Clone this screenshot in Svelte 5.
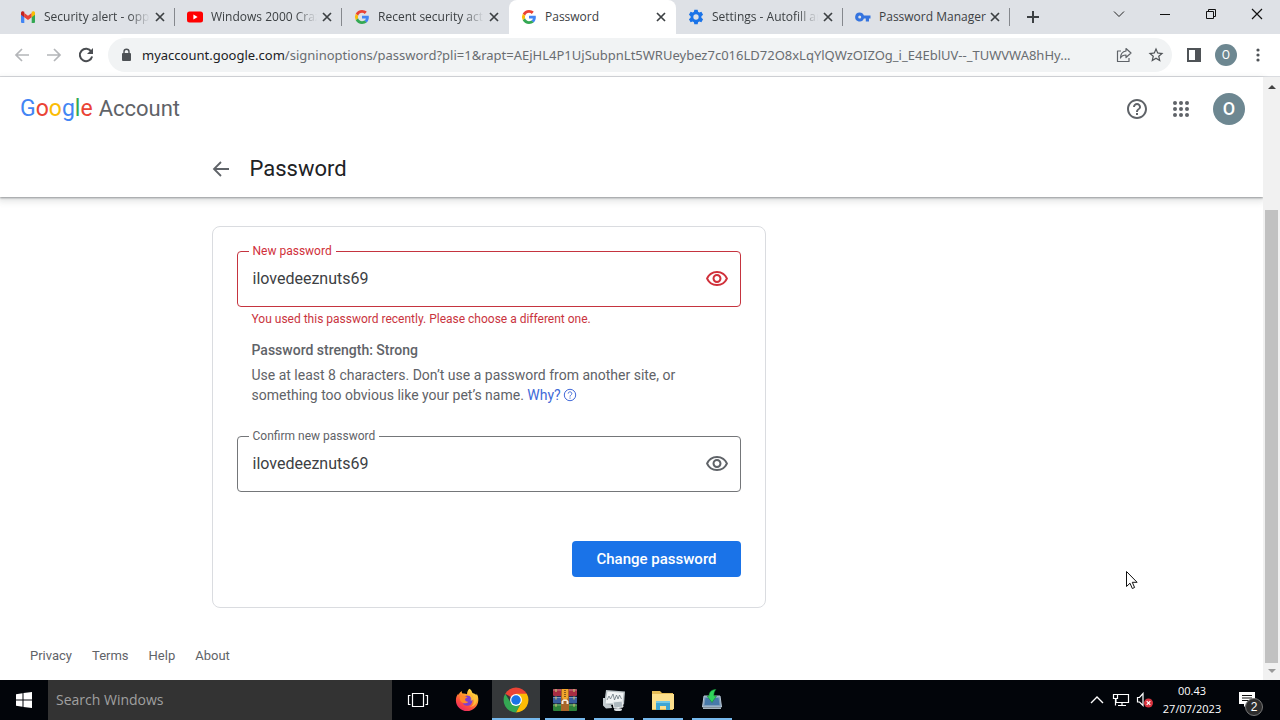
<script>
  const tabs = [
    { icon: 'gmail', title: 'Security alert - oppo', long: true },
    { icon: 'youtube', title: 'Windows 2000 Crazy', long: true },
    { icon: 'google', title: 'Recent security activity', long: true },
    { icon: 'google', title: 'Password', active: true },
    { icon: 'gear', title: 'Settings - Autofill and', long: true },
    { icon: 'key', title: 'Password Manager' }
  ];
  const apps = [
    { id: 'taskview', label: 'Task View' },
    { id: 'firefox', label: 'Firefox' },
    { id: 'chrome', label: 'Chrome', open: true, active: true },
    { id: 'winrar', label: 'WinRAR', open: true },
    { id: 'monitor', label: 'Performance Monitor', open: true },
    { id: 'explorer', label: 'File Explorer', open: true },
    { id: 'installer', label: 'Installer', open: true }
  ];
  const wordmark = [
    ['G', '#4285f4'], ['o', '#ea4335'], ['o', '#fbbc05'],
    ['g', '#4285f4'], ['l', '#34a853'], ['e', '#ea4335']
  ];
  const dots = [6, 12, 18];
  let newPassword = $state('ilovedeeznuts69');
  let confirmPassword = $state('ilovedeeznuts69');
</script>

{#snippet favicon(name)}
  {#if name === 'gmail'}
    <svg class="fav" viewBox="0 0 16 16" aria-hidden="true">
      <path d="M1 4.2V13a1 1 0 0 0 1 1h2.3V7z" fill="#4285f4" />
      <path d="M15 4.2V13a1 1 0 0 1-1 1h-2.3V7z" fill="#34a853" />
      <path d="M4.3 4v4.2L8 11l3.7-2.8V4L8 6.8z" fill="#ea4335" />
      <path d="M1 4c0-1.700 1.700-2.400 3.300-1.200v5.400L1 5.700z" fill="#c5221f" />
      <path d="M15 4c0-1.700-1.700-2.400-3.300-1.200v5.400L15 5.700z" fill="#fbbc04" />
    </svg>
  {:else if name === 'youtube'}
    <svg class="fav" viewBox="0 0 16 16" aria-hidden="true">
      <rect x="0" y="2.500" width="16" height="11" rx="2.500" fill="#f00" />
      <path d="M6.400 5.600v4.800L10.600 8z" fill="#fff" />
    </svg>
  {:else if name === 'google'}
    <svg class="fav" viewBox="0 0 48 48" aria-hidden="true">
      <path fill="#EA4335" d="M24 11.500c3.200 0 6 1.100 8.200 3.200l6.100-6.100C34.600 5.100 29.700 3 24 3 15.800 3 8.700 7.700 5.200 14.600l7.100 5.500c1.700-5 6.300-8.600 11.700-8.600z" />
      <path fill="#4285F4" d="M44.500 24.500c0-1.600-.2-2.700-.4-4H24v7.800h11.700c-.5 3-2.200 5.300-4.700 7l6.900 5.300c4.200-3.900 6.600-9.500 6.600-16.100z" />
      <path fill="#FBBC05" d="M12.300 27.900a12.600 12.600 0 0 1 0-7.800l-7.100-5.500a21 21 0 0 0 0 18.800z" />
      <path fill="#34A853" d="M24 45c5.700 0 10.400-1.900 13.900-5.100L31 34.600c-1.900 1.300-4.200 1.900-7 1.900-5.400 0-10-3.600-11.700-8.600l-7.100 5.500C8.700 40.300 15.800 45 24 45z" />
    </svg>
  {:else if name === 'gear'}
    <svg class="fav" viewBox="0 0 24 24" aria-hidden="true">
      <path fill="#1a73e8" fill-rule="evenodd" d="M9.500 1h5l.6 3.200 1.900 1.100 3.100-1.100 2.500 4.300-2.500 2.200v2.600l2.500 2.200-2.500 4.300-3.100-1.100-1.900 1.100-.6 3.200h-5l-.6-3.200L7 18.700l-3.100 1.100-2.500-4.300 2.500-2.200v-2.600L1.400 8.500l2.500-4.300L7 5.300l1.900-1.100zM12 8a4 4 0 1 0 0 8 4 4 0 0 0 0-8z" />
    </svg>
  {:else}
    <svg class="fav" viewBox="0 0 16 16" aria-hidden="true">
      <path fill="#3574df" fill-rule="evenodd" d="M4.700 3.500a4.500 4.500 0 0 1 4.200 3H15.500v3H14v3h-3.200v-3H8.900a4.500 4.500 0 1 1-4.200-6zm0 3a1.500 1.500 0 1 0 0 3 1.500 1.500 0 0 0 0-3z" />
    </svg>
  {/if}
{/snippet}

{#snippet cross()}
  <svg width="16" height="16" viewBox="0 0 16 16" fill="none" stroke="#3c4043" stroke-width="1.700" aria-hidden="true">
    <path d="M4 4l8 8M12 4l-8 8" />
  </svg>
{/snippet}

{#snippet eye()}
  <svg width="24" height="24" viewBox="0 0 24 24" fill="currentColor" aria-hidden="true">
    <path d="M12 6a9.770 9.770 0 0 1 8.820 5.500 9.760 9.760 0 0 1-17.640 0A9.770 9.770 0 0 1 12 6m0-2C7 4 2.730 7.110 1 11.500 2.730 15.890 7 19 12 19s9.270-3.110 11-7.500C21.270 7.110 17 4 12 4zm0 5a2.500 2.500 0 0 1 0 5 2.500 2.500 0 0 1 0-5m0-2c-2.480 0-4.500 2.020-4.500 4.500S9.520 16 12 16s4.500-2.020 4.500-4.500S14.480 7 12 7z" />
  </svg>
{/snippet}

{#snippet appIcon(id)}
  {#if id === 'taskview'}
    <svg width="24" height="24" viewBox="0 0 24 24" fill="none" stroke="#fff" stroke-width="1.200" aria-hidden="true">
      <path d="M6.500 5.500h11v13h-11zM4.500 7.500h-2v9h2M19.500 7.500h2v9h-2" />
    </svg>
  {:else if id === 'firefox'}
    <svg width="24" height="24" viewBox="0 0 24 24" aria-hidden="true">
      <defs>
        <linearGradient id="fox" x1=".8" y1="0" x2=".2" y2="1">
          <stop offset="0" stop-color="#fff04a" /><stop offset=".35" stop-color="#ffa42b" />
          <stop offset=".7" stop-color="#ff4b3e" /><stop offset="1" stop-color="#e3246c" />
        </linearGradient>
      </defs>
      <path d="M14.500.800c2 1.200 2.400 3 3 4.200 2.200.6 3.500 1.500 4 2.200.1-.6 0-1.200-.2-1.700 1.500 1.600 2.200 4.200 2 6.900C22.900 18.500 18 23 12 23S1 18.300.900 12.400C.9 9.500 1.800 7.300 3.300 5.500c0 .6.100 1 .4 1.400C4.300 5 5.500 3.700 6.800 3c-.2 1 .1 1.900.7 2.500 1.600-.3 3.300 0 4.500.8 0-2.200.8-4.300 2.500-5.500z" fill="url(#fox)" />
      <circle cx="12.300" cy="12.600" r="5.200" fill="#7f3fd0" />
      <path d="M5 8.300c2.500-1 5.500-.3 7.700 1.200-1.700.2-2.500.9-2.600 2-.1 1.400 1.400 2.600 3.400 2.200-1.500 1.700-4.900 2.400-7.200.4C4.700 12.600 4.500 10 5 8.300z" fill="#ff8a27" />
      <path d="M14 4c3 1.500 4.500 4 4.500 7-.6-1.900-2-3.200-3.800-3.800 1 1.600 1.500 3.600 1 5.500 2 0 3-1.700 3-1.700 1 4-1 7-4 8 4-.3 7-3 7.300-7.500C22 7 17.500 6 14 4z" fill="#ffc53b" opacity=".8" />
    </svg>
  {:else if id === 'chrome'}
    <svg width="26" height="26" viewBox="0 0 48 48" aria-hidden="true">
      <path d="M24 24L4.100 12.500A23 23 0 0 1 43.900 12.500z" fill="#ea4335" />
      <path d="M14.500 29.500L4.100 12.500A23 23 0 0 0 24 47l9.500-17.500z" fill="#34a853" />
      <path d="M24 12.500h19.900A23 23 0 0 1 24 47l9.500-17.500z" fill="#fbbc04" />
      <circle cx="24" cy="24" r="11" fill="#fff" /><circle cx="24" cy="24" r="8.800" fill="#1a73e8" />
    </svg>
  {:else if id === 'winrar'}
    <svg width="24" height="24" viewBox="0 0 24 24" aria-hidden="true">
      <rect y="1" width="24" height="7" rx="1" fill="#a72d43" />
      <rect y="8.500" width="24" height="7" rx="1" fill="#385d9d" />
      <rect y="16" width="24" height="7" rx="1" fill="#2d823b" />
      <path d="M0 2h24M0 9.500h24M0 17h24" stroke="#fff" stroke-opacity=".35" />
      <path d="M3 1v22M21 1v22" stroke="#c9c06b" stroke-width="1.200" stroke-dasharray="3 4.400" />
      <rect x="8" y="1" width="8" height="22" fill="#a9652a" />
      <path d="M9 1h6v9l-3 3-3-3z" fill="#f0a52b" />
      <path d="M8.500 16v-2.500l1.500-2h4l1.500 2V16h-2v-3h-3v3z" fill="#f5eee4" />
      <path d="M12 2v7" stroke="#69411c" stroke-width="1.500" stroke-dasharray="1 1" />
    </svg>
  {:else if id === 'monitor'}
    <svg width="24" height="24" viewBox="0 0 24 24" aria-hidden="true">
      <path d="M4 2l19 1.500-1 13L2 17z" fill="#b9c2c6" />
      <path d="M5.500 3.500l16 1.300-1 10-17 .7z" fill="#f1f4f5" />
      <path d="M5 12l2-4 1.500 3L11 6l1.500 6 2-5 1.500 4 1.500-4 2 4" fill="none" stroke="#69777f" stroke-width=".8" />
      <path d="M1 10l2 0v6l6 1 1 3-6 .5-3-3z" fill="#c3cbcf" />
      <path d="M11 14l9-1 1 6-9 1z" fill="#aeb9bf" stroke="#edf0f1" />
      <ellipse cx="16" cy="21.500" rx="4" ry="1.500" fill="#dce1e4" />
    </svg>
  {:else if id === 'explorer'}
    <svg width="24" height="24" viewBox="0 0 24 24" aria-hidden="true">
      <path d="M1 3h8l2 2h11v17H1z" fill="#e6bd57" />
      <path d="M1 6h22v15H1z" fill="#fde08d" />
      <path d="M5 13h14v9h-4v-4H9v4H5z" fill="#3fa6d3" />
      <path d="M5 13h14v2H5z" fill="#76c9e7" />
    </svg>
  {:else}
    <svg width="24" height="24" viewBox="0 0 24 24" aria-hidden="true">
      <path d="M4 8h16l1.500 11h-19z" fill="#7f9dbb" stroke="#b8c8d7" />
      <path d="M5.500 10h13l1 7h-15z" fill="#4779a9" />
      <path d="M3 19.500h18V21H3z" fill="#a7b5bf" />
      <path d="M16 1.500c-4.500 0-7 2.500-7 6.500H7l5 6.500L16.500 8H14c-.5-2.500.5-5 2-6.500z" fill="#31d45b" stroke="#127f31" stroke-width=".5" />
    </svg>
  {/if}
{/snippet}

<div class="screen">
  <header class="tabstrip">
    <nav class="tabs" aria-label="Tabs">
      {#each tabs as tab}
        <div class="tab" class:active={tab.active}>
          {@render favicon(tab.icon)}
          <span class="tab-title" class:faded={tab.long}>{tab.title}</span>
          <button class="bare tab-close" aria-label="Close tab">{@render cross()}</button>
        </div>
      {/each}
    </nav>
    <button class="bare new-tab" aria-label="New tab">
      <svg width="16" height="16" viewBox="0 0 16 16" stroke="#3c4043" stroke-width="2" aria-hidden="true"><path d="M8 2v12M2 8h12" /></svg>
    </button>
    <div class="window-controls">
      <button class="bare" aria-label="Search tabs">
        <svg width="12" height="12" viewBox="0 0 12 12" fill="none" stroke="#222" aria-hidden="true"><path d="M1 3.500l5 5 5-5" /></svg>
      </button>
      <button class="bare" aria-label="Minimize">
        <svg width="12" height="12" viewBox="0 0 12 12" stroke="#111" aria-hidden="true"><path d="M1 6.500h10" /></svg>
      </button>
      <button class="bare" aria-label="Restore">
        <svg width="12" height="12" viewBox="0 0 12 12" fill="none" stroke="#111" aria-hidden="true"><path d="M1.500 3.500h7v7h-7zM3.500 3.500v-2h7v7h-2" /></svg>
      </button>
      <button class="bare" aria-label="Close window">
        <svg width="12" height="12" viewBox="0 0 12 12" stroke="#111" stroke-width="1.200" aria-hidden="true"><path d="M1 1l10 10M11 1L1 11" /></svg>
      </button>
    </div>
  </header>

  <div class="toolbar">
    <button class="bare tool" aria-label="Back">
      <svg width="16" height="16" viewBox="0 0 16 16" fill="none" stroke="#b4b6b9" stroke-width="1.700" aria-hidden="true"><path d="M15 8H2M8 2L2 8l6 6" /></svg>
    </button>
    <button class="bare tool" aria-label="Forward">
      <svg width="16" height="16" viewBox="0 0 16 16" fill="none" stroke="#b4b6b9" stroke-width="1.700" aria-hidden="true"><path d="M1 8h13M8 2l6 6-6 6" /></svg>
    </button>
    <button class="bare tool" aria-label="Reload">
      <svg width="16" height="16" viewBox="0 0 16 16" fill="none" aria-hidden="true"><path d="M13.300 4.600A6.200 6.200 0 1 0 14.100 9.500" stroke="#4a4d51" stroke-width="2" /><path d="M15 1v6H9z" fill="#4a4d51" /></svg>
    </button>
    <div class="omnibox">
      <svg width="12" height="14" viewBox="0 0 12 14" aria-hidden="true"><rect x="2" y="5" width="9" height="8" rx="1" fill="#4d5155" /><path d="M4 6V3.800a2.500 2.500 0 0 1 5 0V6" fill="none" stroke="#4d5155" stroke-width="1.400" /></svg>
      <span class="url"><b>myaccount.google.com</b>/signinoptions/password?pli=1&amp;rapt=AEjHL4P1UjSubpnLt5WRUeybez7c016LD72O8xLqYlQWzOIZOg_i_E4EblUV--_TUWVWA8hHy...</span>
      <button class="bare" aria-label="Share">
        <svg width="16" height="16" viewBox="0 0 16 16" fill="none" stroke="#5f6368" stroke-width="1.200" stroke-linejoin="round" aria-hidden="true"><path d="M5 4H1.500v10.500H13V11M10 1.500l5 4.500-5 4.500V8C7 8 5.500 9 4.500 11 4.500 7 7 4.500 10 4z" /></svg>
      </button>
      <button class="bare" aria-label="Bookmark">
        <svg width="18" height="18" viewBox="0 0 24 24" fill="#4f5357" aria-hidden="true"><path d="M22 9.240l-7.190-.62L12 2 9.190 8.630 2 9.240l5.460 4.730L5.820 21 12 17.270 18.180 21l-1.630-7.030L22 9.240zM12 15.400l-3.760 2.270 1-4.280-3.320-2.880 4.380-.38L12 6.100l1.710 4.040 4.380.38-3.320 2.880 1 4.280L12 15.400z" /></svg>
      </button>
    </div>
    <button class="bare side" aria-label="Side panel">
      <svg width="14" height="14" viewBox="0 0 14 14" aria-hidden="true"><path d="M1 1h12v12H1z" fill="none" stroke="#4f5357" stroke-width="2" /><path d="M8 1h6v12H8z" fill="#4f5357" /></svg>
    </button>
    <button class="bare avatar small" aria-label="Profile">O</button>
    <button class="bare menu" aria-label="Menu">
      <svg width="4" height="16" viewBox="0 0 4 16" fill="#4f5357" aria-hidden="true"><circle cx="2" cy="3" r="1.600" /><circle cx="2" cy="8" r="1.600" /><circle cx="2" cy="13" r="1.600" /></svg>
    </button>
  </div>

  <div class="viewport">
    <div class="page">
      <header class="page-head">
        <div class="brand-row">
          <a class="brand" href="#home">
            <span class="wordmark">{#each wordmark as [letter, color]}<span style:color>{letter}</span>{/each}</span>
            <span>Account</span>
          </a>
          <div class="head-actions">
            <button class="bare" aria-label="Help">
              <svg width="24" height="24" viewBox="0 0 24 24" fill="#5f6368" aria-hidden="true"><path d="M11 18h2v-2h-2v2zm1-16C6.480 2 2 6.480 2 12s4.480 10 10 10 10-4.480 10-10S17.520 2 12 2zm0 18c-4.410 0-8-3.590-8-8s3.590-8 8-8 8 3.590 8 8-3.590 8-8 8zm0-14c-2.210 0-4 1.790-4 4h2c0-1.100.9-2 2-2s2 .9 2 2c0 2-3 1.750-3 5h2c0-2.250 3-2.500 3-5 0-2.210-1.790-4-4-4z" /></svg>
            </button>
            <button class="bare" aria-label="Google apps">
              <svg width="24" height="24" viewBox="0 0 24 24" fill="#5f6368" aria-hidden="true">
                {#each dots as y}{#each dots as x}<circle cx={x} cy={y} r="2" />{/each}{/each}
              </svg>
            </button>
            <button class="bare avatar" aria-label="Account">O</button>
          </div>
        </div>
        <div class="title-row">
          <a href="#back" aria-label="Back">
            <svg width="18" height="18" viewBox="0 0 18 18" fill="none" stroke="#5f6368" stroke-width="1.800" aria-hidden="true"><path d="M17 9H2.500M9 2L2 9l7 7" /></svg>
          </a>
          <h1>Password</h1>
        </div>
      </header>

      <main>
        <form class="card" onsubmit={(e) => e.preventDefault()}>
          <div class="field error">
            <label for="new-password">New password</label>
            <input id="new-password" type="text" spellcheck="false" aria-describedby="new-error" bind:value={newPassword} />
            <button type="button" class="bare" aria-label="Hide new password">{@render eye()}</button>
          </div>
          <p class="error-text" id="new-error">You used this password recently. Please choose a different one.</p>
          <p class="strength">Password strength: Strong</p>
          <p class="advice">
            Use at least 8 characters. Don’t use a password from another site, or something too obvious like your pet’s name.
            <a href="#why">Why?<svg width="14" height="14" viewBox="0 0 14 14" fill="none" stroke="currentColor" aria-hidden="true"><circle cx="7" cy="7" r="5.700" /><path d="M5.200 5.600c0-2.400 3.600-2.300 3.600 0C8.800 7 7 7 7 8.600M7 9.500v1.200" /></svg></a>
          </p>
          <div class="field">
            <label for="confirm-password">Confirm new password</label>
            <input id="confirm-password" type="text" spellcheck="false" bind:value={confirmPassword} />
            <button type="button" class="bare" aria-label="Hide confirmed password">{@render eye()}</button>
          </div>
          <button class="submit" type="submit">Change password</button>
        </form>
      </main>

      <footer>
        <a href="#privacy">Privacy</a>
        <a href="#terms">Terms</a>
        <a href="#help">Help</a>
        <a href="#about">About</a>
      </footer>
    </div>
    <div class="scrollbar" aria-hidden="true">
      <svg width="8" height="4" viewBox="0 0 8 4"><path d="M0 4l4-4 4 4z" fill="#444" /></svg>
      <div class="track"><div class="thumb"></div></div>
      <svg width="8" height="4" viewBox="0 0 8 4"><path d="M0 0l4 4 4-4z" fill="#999" /></svg>
    </div>
    <svg class="pointer" width="13" height="20" viewBox="0 0 13 20" fill="#fff" stroke="#111" aria-hidden="true">
      <path d="M1.500 1.500v15l3.500-3.300 2.300 5.300 2.300-1-2.300-5.200h4.800z" />
    </svg>
  </div>

  <footer class="taskbar">
    <button class="bare start" aria-label="Start">
      <svg width="16" height="16" viewBox="0 0 16 16" fill="#fff" aria-hidden="true"><path d="M0 2.200L6.500 1.300V7.500H0zM7.500 1.100L16 0v7.500H7.500zM0 8.500h6.500v6.200L0 13.800zM7.500 8.500H16V16l-8.500-1.100z" /></svg>
    </button>
    <input class="search" type="search" aria-label="Search Windows" placeholder="Search Windows" />
    <nav class="apps" aria-label="Applications">
      {#each apps as app}
        <button class="bare app" class:open={app.open} class:current={app.active} aria-label={app.label}>
          {@render appIcon(app.id)}
        </button>
      {/each}
    </nav>
    <div class="tray">
      <button class="bare" aria-label="Show hidden icons">
        <svg width="14" height="14" viewBox="0 0 14 14" fill="none" stroke="#fff" stroke-width="1.400" aria-hidden="true"><path d="M1 10l6-6 6 6" /></svg>
      </button>
      <button class="bare" aria-label="Network">
        <svg width="18" height="16" viewBox="0 0 18 16" fill="none" stroke="#fff" stroke-width="1.200" aria-hidden="true"><path d="M6 2.500h10.500v8H4V7M10 10.500v3M6 13.500h8M1.500 2.500h4v4h-4zM3.500 6.500v7" /></svg>
      </button>
      <button class="bare" aria-label="Volume">
        <svg width="18" height="16" viewBox="0 0 18 16" aria-hidden="true"><path d="M1.500 5.500h2l3.500-4v12l-3.500-3.500h-2z" fill="none" stroke="#fff" stroke-width="1.200" /><circle cx="12.500" cy="11" r="4.500" fill="#d9343f" /><path d="M10.700 9.200l3.600 3.600M14.300 9.200l-3.600 3.600" stroke="#fff" stroke-width="1.200" /></svg>
      </button>
      <div class="clock"><span>00.43</span><span>27/07/2023</span></div>
      <button class="bare notices" aria-label="2 notifications">
        <svg width="16" height="16" viewBox="0 0 16 16" aria-hidden="true"><path d="M0 0h16v12H8l-3 3v-3H0z" fill="#fff" /><path d="M3 3.500h10M3 6h10M3 8.500h7" stroke="#111" /></svg>
        <span class="badge">2</span>
      </button>
    </div>
  </footer>
</div>

<style>
  :global(body) { margin: 0; background: #fff; }
  .screen, .screen * { box-sizing: border-box; }
  .screen {
    min-height: 100vh;
    display: flex;
    flex-direction: column;
    font-family: Roboto, "Liberation Sans", sans-serif;
    color: #5f6368;
  }
  svg { display: block; flex: none; }
  a { color: inherit; text-decoration: none; }
  .bare {
    display: flex;
    align-items: center;
    justify-content: center;
    padding: 0;
    border: 0;
    background: none;
    color: inherit;
    flex: none;
  }

  .tabstrip { display: flex; height: 34px; padding-left: 8px; background: #dee1e6; }
  .tabs { display: flex; flex: 0 1 1002px; min-width: 0; }
  .tab {
    flex: 1 1 0;
    min-width: 0;
    display: flex;
    align-items: center;
    padding: 0 7px 0 12px;
    background: linear-gradient(#85888d, #85888d) right center / 1px 18px no-repeat;
  }
  .tab.active, .tab:has(+ .active) { background-image: none; }
  .tab.active { background-color: #fff; border-radius: 8px 8px 0 0; }
  .fav { width: 16px; height: 16px; margin-right: 8px; }
  .tab-title {
    flex: 1;
    min-width: 0;
    white-space: nowrap;
    font: 12px/16px "Open Sans", "Noto Sans", sans-serif;
    color: #3c4043;
  }
  .tab-title.faded {
    overflow: hidden;
    mask-image: linear-gradient(to right, #000 80%, transparent);
  }
  .tab-close { width: 16px; height: 16px; margin-left: 2px; }
  .new-tab { width: 46px; }
  .window-controls { display: flex; margin-left: auto; height: 28px; }
  .window-controls button { width: 46px; }

  .toolbar {
    display: flex;
    align-items: center;
    height: 43px;
    padding: 0 14px 0 6px;
    border-bottom: 1px solid #dadce0;
    background: #fff;
  }
  .tool { width: 32px; height: 32px; }
  .omnibox {
    flex: 1;
    min-width: 0;
    display: flex;
    align-items: center;
    height: 34px;
    margin-left: 6px;
    padding-left: 12px;
    border-radius: 17px;
    background: #f1f3f4;
  }
  .omnibox button { width: 32px; height: 32px; }
  .url {
    flex: 1;
    min-width: 0;
    margin: 0 6px 0 10px;
    overflow: hidden;
    white-space: nowrap;
    font: 13px/20px "Noto Sans", "Open Sans", sans-serif;
    color: #696d71;
  }
  .url b { font-weight: 400; color: #202124; }
  .side { width: 32px; height: 32px; margin-left: 6px; }
  .avatar {
    width: 32px;
    height: 32px;
    border-radius: 50%;
    background: #6d8791;
    color: #fff;
    font: 500 18px/32px Roboto, sans-serif;
  }
  .avatar.small { width: 22px; height: 22px; margin: 0 13px 0 5px; font-size: 12px; line-height: 22px; font-weight: 400; }
  .menu { width: 16px; height: 32px; }

  .viewport { position: relative; flex: 1; display: flex; background: #fff; }
  .page { flex: 1; min-width: 0; display: flex; flex-direction: column; }
  .page-head { box-shadow: 0 1px 2px rgba(60, 64, 67, .5), 0 3px 6px 2px rgba(60, 64, 67, .12); }
  .brand-row { display: flex; align-items: center; justify-content: space-between; height: 64px; padding: 0 18px 0 20px; }
  .brand { display: flex; align-items: baseline; gap: 6px; font: 22px/30px Roboto, sans-serif; }
  .wordmark { font-size: 23px; }
  .head-actions { display: flex; align-items: center; gap: 20px; }
  .title-row { display: flex; align-items: center; gap: 20px; height: 56px; max-width: 840px; margin: 0 auto; }
  h1 { margin: 0; font: 400 22px/28px Roboto, sans-serif; color: #202124; }

  main { width: 100%; max-width: 840px; margin: 0 auto; padding-top: 29px; }
  .card {
    display: flex;
    flex-direction: column;
    max-width: 554px;
    padding: 24px 24px 30px;
    border: 1px solid #dadce0;
    border-radius: 8px;
  }
  .field {
    position: relative;
    display: flex;
    align-items: center;
    height: 56px;
    padding: 0 11px 0 15px;
    border: 1px solid #747679;
    border-radius: 4px;
    color: #5f6368;
  }
  .field label {
    position: absolute;
    top: -8px;
    left: 11px;
    padding: 0 4px;
    background: #fff;
    font-size: 12px;
    line-height: 14px;
  }
  .field input {
    flex: 1;
    min-width: 0;
    padding: 0;
    border: 0;
    outline: 0;
    background: none;
    font: 16px/24px Roboto, sans-serif;
    color: #3c4043;
  }
  .field.error { border-color: #c5343f; color: #d0303a; }
  p { margin: 0 15px; }
  .error-text { margin-top: 4px; font-size: 12px; line-height: 16px; color: #c9343e; }
  .strength { margin-top: 13px; font-size: 14px; line-height: 20px; font-weight: 500; }
  .advice { margin-top: 5px; margin-bottom: 31px; font-size: 14px; line-height: 20px; }
  .advice a { display: inline-flex; align-items: center; gap: 2px; color: #4169d8; }
  .submit {
    align-self: flex-end;
    height: 36px;
    margin-top: 49px;
    padding: 0 24px;
    border: 0;
    border-radius: 4px;
    background: #1a73e8;
    color: #fff;
    font: 500 15px/20px Roboto, sans-serif;
  }
  .page > footer { display: flex; gap: 20px; margin-top: auto; padding: 0 30px 16px; font-size: 13px; line-height: 16px; }

  .scrollbar { display: flex; flex-direction: column; align-items: center; width: 17px; padding: 8px 2px 7px; background: #f1f1f1; }
  .track { align-self: stretch; flex: 1; display: flex; flex-direction: column; justify-content: flex-end; padding-bottom: 6px; }
  .thumb { height: 79%; background: #c1c1c1; }
  .pointer { position: absolute; right: 142px; bottom: 90px; }

  .taskbar { display: flex; height: 40px; background: #02050a; color: #fff; font-family: "Open Sans", "Noto Sans", sans-serif; }
  .start { width: 48px; }
  .search {
    appearance: none;
    flex: 0 1 344px;
    min-width: 0;
    padding: 0 8px;
    border: 0;
    border-radius: 0;
    outline: 0;
    background: #333;
    color: #fff;
    font: 14px/20px "Open Sans", "Noto Sans", sans-serif;
  }
  .search::placeholder { color: #a0a0a0; opacity: 1; }
  .apps { display: flex; gap: 1px; padding-left: 2px; }
  .app { width: 48px; }
  .app.open { background: linear-gradient(#76b9ed, #76b9ed) center bottom / 40px 2px no-repeat; }
  .app.current { background-color: #35383a; background-size: 100% 2px; }
  .tray { display: flex; align-items: center; margin-left: auto; padding-right: 13px; }
  .tray > button { width: 24px; height: 40px; }
  .clock { display: flex; flex-direction: column; align-items: center; width: 70px; font-size: 11px; line-height: 18px; }
  .tray > .notices { position: relative; width: 40px; }
  .badge {
    position: absolute;
    right: 4px;
    bottom: 4px;
    width: 18px;
    height: 18px;
    border: 1px solid #777;
    border-radius: 50%;
    background: #2d2d2d;
    font-size: 12px;
    line-height: 16px;
    text-align: center;
  }
</style>
